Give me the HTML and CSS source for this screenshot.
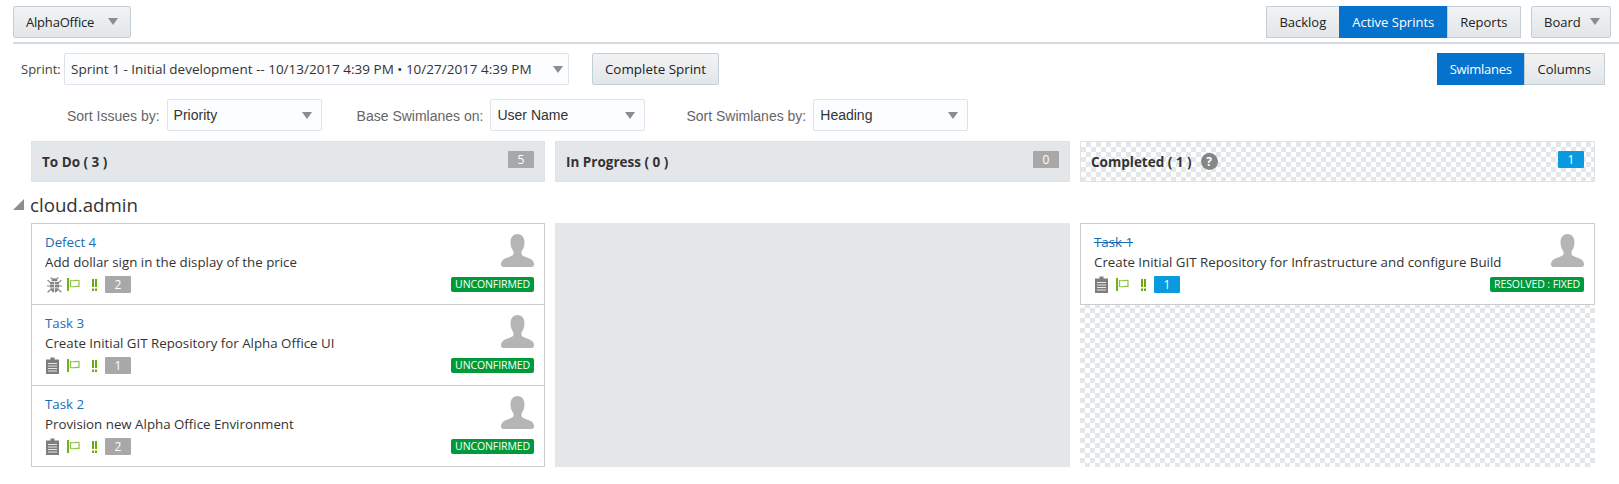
FILE: index.html
```html
<!DOCTYPE html>
<html lang="en">
<head>
  <meta charset="UTF-8">
  <title>AlphaOffice - Active Sprints</title>
  <link rel="stylesheet" href="styles.css">
</head>
<body>
  <svg class="defs" width="0" height="0">
    <symbol id="bug" viewBox="0 0 15 16">
      <path d="M4.500 4.200a3 2.900 0 0 1 6 0z" fill="#868686"/>
      <path d="M3 5h4.100v2.500H3zM7.900 5H12v2.500H7.900zM3 8.100h4.100v2.500H3zM7.900 8.100H12v2.500H7.900zM3.300 11.200h3.800v4.300c-2-.3-3.400-2-3.800-4.300zM7.900 11.200h3.800c-.4 2.300-1.800 4-3.800 4.300z" fill="#868686"/>
      <path d="M3.800 .5l1.800 2M11.200 .5l-1.800 2M.6 3.300l2.900 2.300M14.400 3.300l-2.900 2.300M0 9h3.500M15 9h-3.500M.6 15.200l3-2.700M14.400 15.200l-3-2.700" stroke="#868686" stroke-width="1.200" fill="none"/>
    </symbol>
    <symbol id="task" viewBox="0 0 13 17">
      <path d="M4.500 2.500V.5h4v2h4.500V17H0V2.500z" fill="#7d7d7d"/>
      <path d="M2 6.500h9M2 9h9M2 11.500h9M2 14h9" stroke="#e8e8e8" stroke-width="1"/>
    </symbol>
    <symbol id="flag" viewBox="0 0 13 13">
      <rect x="0" y="0" width="2" height="13" fill="#6eb31a"/>
      <path d="M3.500 2.500c3 1 5-.8 8.500 0v6c-3.500-.8-5.500 1-8.500 0z" fill="#fff" stroke="#8fc24a" stroke-width="1.200"/>
    </symbol>
    <symbol id="high" viewBox="0 0 5 12">
      <path d="M0 0h2v8H0zM3 0h2v8H3zM0 9.500h2V12H0zM3 9.500h2V12H3z" fill="#6fa80a"/>
    </symbol>
    <symbol id="person" viewBox="0 0 33 33">
      <path d="M16.500 0c4.500 0 7 3.500 7 8.500 0 4-1.500 7-3 9v2.500c0 2.500 9 3.500 11.500 7 .8 1.200 1 2.500 1 3.500 0 1.500-1 2.500-2.500 2.500H2.500C1 33 0 32 0 30.500c0-1 .2-2.300 1-3.500 2.500-3.500 11.500-4.500 11.500-7v-2.500c-1.500-2-3-5-3-9C9.500 3.500 12 0 16.500 0z" fill="#b5b5b5"/>
    </symbol>
  </svg>

  <header class="top-bar">
    <button class="btn btn-project">AlphaOffice <span class="caret"></span></button>
    <div class="top-right">
      <div class="btn-group nav-group">
        <button class="btn">Backlog</button>
        <button class="btn active">Active Sprints</button>
        <button class="btn">Reports</button>
      </div>
      <button class="btn btn-board">Board <span class="caret"></span></button>
    </div>
  </header>

  <div class="sprint-row">
    <span class="sprint-label">Sprint:</span>
    <div class="select select-sprint">
      <span>Sprint 1 - Initial development -- 10/13/2017 4:39 PM • 10/27/2017 4:39 PM</span>
      <span class="caret"></span>
    </div>
    <button class="btn btn-complete">Complete Sprint</button>
    <div class="btn-group view-toggle">
      <button class="btn active btn-swim">Swimlanes</button>
      <button class="btn">Columns</button>
    </div>
  </div>

  <div class="sort-row">
    <label class="sort-label sort-issues">Sort Issues by:</label>
    <div class="select select-sort"><span>Priority</span><span class="caret"></span></div>
    <label class="sort-label sort-base">Base Swimlanes on:</label>
    <div class="select select-sort"><span>User Name</span><span class="caret"></span></div>
    <label class="sort-label sort-lanes">Sort Swimlanes by:</label>
    <div class="select select-sort"><span>Heading</span><span class="caret"></span></div>
  </div>

  <div class="board-grid">
    <div class="col-head">
      <strong>To Do ( 3 )</strong>
      <span class="count">5</span>
    </div>
    <div class="col-head">
      <strong>In Progress ( 0 )</strong>
      <span class="count">0</span>
    </div>
    <div class="col-head checker">
      <strong>Completed ( 1 )</strong>
      <span class="help">?</span>
      <span class="count count-done">1</span>
    </div>
  </div>

  <h2 class="lane-title"><span class="lane-arrow"></span>cloud.admin</h2>

  <div class="board-grid lane">
    <div class="lane-col">
      <article class="card">
        <div class="card-main">
          <a class="card-link">Defect 4</a>
          <p class="card-text">Add dollar sign in the display of the price</p>
          <div class="card-icons">
            <svg class="ic-bug"><use href="#bug"/></svg>
            <svg class="ic-flag"><use href="#flag"/></svg>
            <svg class="ic-high"><use href="#high"/></svg>
            <span class="points">2</span>
          </div>
        </div>
        <div class="card-side">
          <svg class="avatar"><use href="#person"/></svg>
          <span class="status">UNCONFIRMED</span>
        </div>
      </article>
      <article class="card">
        <div class="card-main">
          <a class="card-link">Task 3</a>
          <p class="card-text">Create Initial GIT Repository for Alpha Office UI</p>
          <div class="card-icons">
            <svg class="ic-task"><use href="#task"/></svg>
            <svg class="ic-flag"><use href="#flag"/></svg>
            <svg class="ic-high"><use href="#high"/></svg>
            <span class="points">1</span>
          </div>
        </div>
        <div class="card-side">
          <svg class="avatar"><use href="#person"/></svg>
          <span class="status">UNCONFIRMED</span>
        </div>
      </article>
      <article class="card">
        <div class="card-main">
          <a class="card-link">Task 2</a>
          <p class="card-text">Provision new Alpha Office Environment</p>
          <div class="card-icons">
            <svg class="ic-task"><use href="#task"/></svg>
            <svg class="ic-flag"><use href="#flag"/></svg>
            <svg class="ic-high"><use href="#high"/></svg>
            <span class="points">2</span>
          </div>
        </div>
        <div class="card-side">
          <svg class="avatar"><use href="#person"/></svg>
          <span class="status">UNCONFIRMED</span>
        </div>
      </article>
    </div>
    <div class="lane-col lane-empty"></div>
    <div class="lane-col checker">
      <article class="card">
        <div class="card-main">
          <a class="card-link done">Task 1</a>
          <p class="card-text">Create Initial GIT Repository for Infrastructure and configure Build</p>
          <div class="card-icons">
            <svg class="ic-task"><use href="#task"/></svg>
            <svg class="ic-flag"><use href="#flag"/></svg>
            <svg class="ic-high"><use href="#high"/></svg>
            <span class="points points-done">1</span>
          </div>
        </div>
        <div class="card-side">
          <svg class="avatar"><use href="#person"/></svg>
          <span class="status">RESOLVED : FIXED</span>
        </div>
      </article>
    </div>
  </div>
</body>
</html>
```

FILE: styles.css
```css
* { margin: 0; padding: 0; box-sizing: border-box; }
body { background: #fff; color: #333; font-family: 'Open Sans', sans-serif; font-size: 13px; overflow: hidden; }
.defs { position: absolute; }

.top-bar { display: flex; justify-content: space-between; margin-left: 13px; padding: 6px 8px 4px 0; border-bottom: 2px solid #d6dadd; height: 44px; }
.top-right { display: flex; gap: 10px; }
.btn {
  height: 32px; padding: 0 13px;
  background: linear-gradient(#f1f3f4, #e3e6e9);
  border: 1px solid #c4ced7; border-radius: 2px;
  color: #222; font-family: inherit; font-size: 13px;
  white-space: nowrap;
}
.btn.active { background: #0572ce; border-color: #0572ce; color: #fff; }
.btn-group { display: flex; }
.btn-group .btn { border-radius: 0; }
.btn-group .btn + .btn { margin-left: -1px; }
.nav-group .btn { padding: 0 12.5px; }
.btn-project { width: 118px; padding: 0 0 0 12px; text-align: left; letter-spacing: -0.2px; }
.btn-project .caret { margin-left: 11px; }
.btn-board { width: 80px; padding: 0 12px; }
.caret { display: inline-block; width: 0; height: 0; margin-left: 6px; border: 5px solid transparent; border-top: 7px solid #8c8c8c; border-bottom: 0; vertical-align: 2px; }

.sprint-row { display: flex; align-items: center; margin-top: 9px; padding-left: 21px; padding-right: 14px; }
.sprint-label { width: 43px; font-size: 13px; color: #444; }
.select {
  display: flex; align-items: center; justify-content: space-between;
  height: 32px; padding: 0 9px 0 6px;
  background: #fcfdfe; border: 1px solid #dfe4ea; border-radius: 2px;
  color: #333;
}
.select .caret { margin: 0; vertical-align: 0; }
.select-sprint { width: 505px; padding-right: 5px; font-size: 13.5px; }
.btn-complete { width: 127px; margin-left: 23px; font-size: 13.4px; padding: 0; }
.view-toggle { margin-left: auto; }
.btn-swim { padding: 0 12px; letter-spacing: -0.3px; }

.sort-row { display: flex; align-items: center; margin-top: 14px; }
.sort-label { font-family: 'Liberation Sans', sans-serif; font-size: 14px; color: #666; margin-right: 7px; padding-top: 1px; }
.sort-issues { margin-left: 67px; }
.sort-base { margin-left: 35px; }
.sort-lanes { margin-left: 41px; }
.select-sort { width: 155px; font-family: 'Liberation Sans', sans-serif; font-size: 14px; }

.board-grid { display: grid; grid-template-columns: 514px 515px 515px; column-gap: 10px; margin-left: 31px; }
.col-head { display: flex; align-items: center; height: 41px; margin-top: 10px; padding: 0 10px; background: #e4e7ea; border: 1px solid #dfe3e7; }
.col-head strong { font-size: 13.5px; color: #333; }
.count { margin-left: auto; min-width: 26px; height: 17px; line-height: 17px; margin-top: -4px; background: #a8a8a8; color: #fff; font-size: 12px; text-align: center; border-radius: 1px; }
.count-done { background: #0a9ae0; }
.help { width: 17px; height: 17px; line-height: 17px; margin-left: 9px; border-radius: 50%; background: #868686; color: #fff; font-size: 12px; font-weight: 700; text-align: center; }
.checker {
  background-color: #fff;
  background-image: repeating-conic-gradient(#e4e7ea 0 25%, #fff 0 50%);
  background-size: 10px 10px;
}

.lane-title { display: flex; align-items: center; height: 31px; margin-top: 7px; padding-left: 13px; font-size: 18.7px; font-weight: 400; color: #333; }
.lane-arrow { width: 0; height: 0; margin-right: 6px; border-style: solid; border-width: 0 0 11px 11px; border-color: transparent transparent #8c8c8c transparent; }

.lane { margin-top: 3px; }
.lane-col { height: 244px; }
.lane-empty { background: #e4e7ea; }
.card { display: flex; justify-content: space-between; height: 82px; padding: 8px 10px 0 13px; background: #fff; border: 1px solid #ccc; }
.card + .card { margin-top: -1px; }
.card-main { flex: 1; min-width: 0; white-space: nowrap; }
.card-link { display: block; color: #1a6cb5; font-size: 13.3px; line-height: 20px; }
.done { text-decoration: line-through; }
.card-text { font-size: 13.3px; line-height: 20px; color: #333; }
.card-icons { display: flex; align-items: center; gap: 5px; margin-top: 4px; padding-left: 1px; height: 17px; }
.ic-bug { width: 15px; height: 16px; margin-left: 1px; }
.ic-task { width: 13px; height: 17px; margin-right: 3px; }
.ic-flag { width: 13px; height: 13px; }
.ic-high { width: 5px; height: 12px; margin-left: 7px; }
.points { min-width: 26px; height: 17px; line-height: 17px; margin-left: 3px; background: #a8a8a8; color: #fff; font-size: 12px; text-align: center; border-radius: 1px; }
.points-done { background: #0a9ae0; }
.card-side { flex: none; display: flex; flex-direction: column; align-items: flex-end; }
.avatar { width: 33px; height: 33px; margin-top: 2px; }
.status { margin-top: 10px; padding: 0 4px; height: 15px; line-height: 15px; background: #009a3a; color: #fff; font-size: 10.5px; letter-spacing: -0.1px; border-radius: 2px; white-space: nowrap; }
```
